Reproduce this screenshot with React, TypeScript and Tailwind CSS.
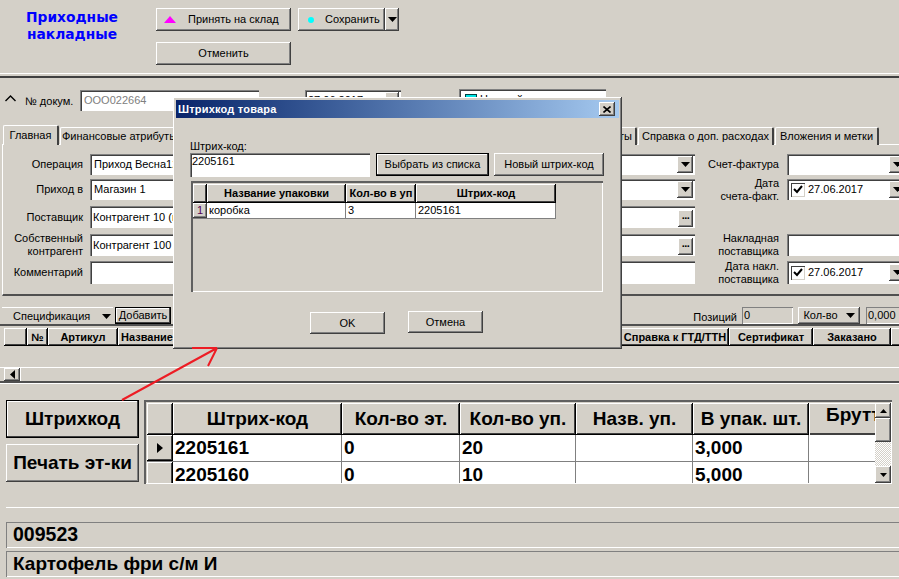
import React from "react";

const RAISED = "shadow-[inset_-1px_-1px_0_#404040,inset_1px_1px_0_#ffffff,inset_-2px_-2px_0_#808080]";
const SUNKEN = "shadow-[inset_1px_1px_0_#808080,inset_2px_2px_0_#404040,inset_-1px_-1px_0_#ffffff]";
const HEAD = "shadow-[inset_-1px_-1px_0_#000000,inset_1px_1px_0_#ffffff,inset_-2px_-2px_0_#404040]";
const DEF = "shadow-[inset_0_0_0_1px_#000000,inset_-2px_-2px_0_#404040,inset_2px_2px_0_#ffffff]";

function Btn({ className = "", children }: { className?: string; children?: React.ReactNode }) {
  return <div className={`flex items-center justify-center bg-[#d4d0c8] text-black shrink-0 ${RAISED} ${className}`}>{children}</div>;
}

function Caret({ className = "" }: { className?: string }) {
  return (
    <svg width="9" height="5" viewBox="0 0 9 5" className={className}>
      <path d="M0 0h9L4.5 5z" fill="#000" />
    </svg>
  );
}

function Input({ className = "", children }: { className?: string; children?: React.ReactNode }) {
  return <div className={`flex items-center bg-white overflow-hidden shrink-0 whitespace-nowrap ${SUNKEN} ${className}`}>{children}</div>;
}

function Combo({ text, w = "w-[605px]" }: { text: string; w?: string }) {
  return (
    <Input className={`h-full pl-[4px] justify-between pr-[2px] ${w}`}>
      <span>{text}</span>
      <Btn className="w-[16px] h-[17px]"><Caret /></Btn>
    </Input>
  );
}

function Lookup({ text }: { text: string }) {
  return (
    <Input className="h-full w-[605px] pl-[3px] pr-[2px] justify-between">
      <span>{text}</span>
      <Btn className="w-[15px] h-[17px] mt-[2px] font-bold items-start leading-[11px] tracking-tighter">...</Btn>
    </Input>
  );
}

function DateBox() {
  return (
    <Input className="h-full w-[120px] pl-[4px] pr-[2px]">
      <span className="w-[14px] h-[14px] bg-white shadow-[inset_1px_1px_0_#404040,inset_-1px_-1px_0_#d4d0c8] flex items-center justify-center shrink-0">
        <svg width="10" height="9" viewBox="0 0 10 9"><path d="M1 4l3 3 5-6" fill="none" stroke="#000" strokeWidth="2" /></svg>
      </span>
      <span className="ml-[3px] flex-1">27.06.2017</span>
      <Btn className="w-[16px] h-[17px]"><Caret /></Btn>
    </Input>
  );
}

function Row({ h, mt, label, field, rlabel, rfield }: { h: string; mt: string; label: React.ReactNode; field: React.ReactNode; rlabel?: React.ReactNode; rfield?: React.ReactNode }) {
  return (
    <div className={`flex items-stretch ${h} ${mt}`}>
      <div className="w-[80px] shrink-0 flex items-center justify-end text-right leading-[13px]">{label}</div>
      <div className="ml-[7px] shrink-0 h-full">{field}</div>
      <div className="w-[84px] shrink-0 flex items-center justify-end text-right leading-[13px]">{rlabel}</div>
      <div className="ml-[8px] shrink-0 h-full">{rfield}</div>
    </div>
  );
}

function Tab({ w, active, children, right }: { w: string; active?: boolean; children: React.ReactNode; right?: boolean }) {
  return (
    <div className={`${w} shrink-0 bg-[#d4d0c8] border-t border-l border-white border-r-2 border-r-[#404040] rounded-t-[2px] flex items-center whitespace-nowrap overflow-hidden ${right ? "justify-end pr-[3px]" : "justify-center"} ${active ? "h-[20px] relative z-10" : "h-[18px] mt-[2px] ml-[1px]"}`}>
      {children}
    </div>
  );
}

function SpecHead({ w, children }: { w: string; children?: React.ReactNode }) {
  return <div className={`${w} h-full shrink-0 flex items-center justify-center font-bold whitespace-nowrap overflow-hidden ${HEAD}`}>{children}</div>;
}

function BigHead({ w, children }: { w: string; children?: React.ReactNode }) {
  return <div className={`${w} h-full shrink-0 flex items-center justify-center whitespace-nowrap overflow-hidden ${HEAD}`}>{children}</div>;
}

function BigCell({ w, children, last }: { w: string; children?: React.ReactNode; last?: boolean }) {
  return <div className={`${w} h-full shrink-0 bg-white pl-[2px] overflow-hidden leading-[25px] whitespace-nowrap ${last ? "" : "border-r border-r-[#808080]"}`}>{children}</div>;
}

function Dialog() {
  const cols = ["w-[139px]", "w-[70px]", "w-[140px]"];
  return (
    <div className="absolute left-[173px] top-[97px] w-[449px] h-[252px] bg-[#d4d0c8] z-20 p-[3px] shadow-[inset_-1px_-1px_0_#404040,inset_1px_1px_0_#ffffff,inset_-2px_-2px_0_#808080]">
      <div className="h-[18px] bg-linear-to-r from-[#0a246a] to-[#a6caf0] flex items-center justify-between pl-[2px] pr-[4px]">
        <span className="text-white font-bold text-[11px] tracking-[0.2px]">Штрихкод товара</span>
        <Btn className="w-[16px] h-[14px]">
          <svg width="8" height="7" viewBox="0 0 8 7"><path d="M0.5 0.5L7.5 6.5M7.5 0.5L0.5 6.5" stroke="#000" strokeWidth="1.6" /></svg>
        </Btn>
      </div>
      <div className="pl-[14px] pt-[22px]">
        <div className="leading-[13px] h-[13px]">Штрих-код:</div>
        <div className="flex h-[24px]">
          <Input className="w-[180px] h-[24px] pl-[2px] items-start pt-[2px] leading-[13px]">2205161</Input>
          <Btn className={`w-[113px] h-[23px] ml-[6px] ${DEF}`}>Выбрать из списка</Btn>
          <Btn className="w-[110px] h-[23px] ml-[5px]">Новый штрих-код</Btn>
        </div>
        <div className="w-[412px] h-[111px] mt-[4px] ml-[1px] p-[3px] pl-[2px] shadow-[inset_2px_2px_0_#606060,inset_-1px_-1px_0_#ffffff]">
          <div className="flex h-[19px] font-bold">
            <div className={`w-[14px] h-full ${HEAD}`} />
            {["Название упаковки", "Кол-во в уп", "Штрих-код"].map((t, i) => (
              <div key={t} className={`${cols[i]} h-full flex items-center justify-center whitespace-nowrap overflow-hidden ${HEAD}`}>{t}</div>
            ))}
          </div>
          <div className="flex w-fit h-[16px] border-b border-b-[#808080]">
            <div className={`w-[14px] h-full flex items-center justify-center text-[#550055] ${RAISED}`}>1</div>
            {["коробка", "3", "2205161"].map((t, i) => (
              <div key={t} className={`${cols[i]} h-full bg-white border-r border-r-[#808080] pl-[2px] leading-[14px]`}>{t}</div>
            ))}
          </div>
        </div>
        <div className="flex items-start mt-[20px] ml-[120px]">
          <Btn className="w-[75px] h-[22px]">OK</Btn>
          <Btn className="w-[75px] h-[22px] ml-[23px] -mt-[1px]">Отмена</Btn>
        </div>
      </div>
    </div>
  );
}

export default function App() {
  return (
    <div className="relative w-[899px] h-[579px] overflow-hidden bg-[#d4d0c8] font-['Liberation_Sans',sans-serif] text-[11px] text-black">
      {/* Toolbar */}
      <div className="flex h-[73px] pt-[8px]">
        <div className="w-[144px] shrink-0 pt-px text-center font-['DejaVu_Sans',sans-serif] font-bold text-[13.8px] leading-[17px] text-[#0000ff]">
          Приходные<br />накладные
        </div>
        <div className="ml-[12px]">
          <div className="flex">
            <Btn className="w-[135px] h-[23px] justify-start">
              <svg width="12" height="7" viewBox="0 0 12 7" className="ml-[8px]"><path d="M6 0l6 7H0z" fill="#ff00ff" /></svg>
              <span className="ml-[12px]">Принять на склад</span>
            </Btn>
            <Btn className="w-[87px] h-[23px] ml-[7px] justify-start">
              <span className="ml-[10px] w-[6px] h-[6px] rounded-full bg-[#00ffff]" />
              <span className="ml-[11px]">Сохранить</span>
            </Btn>
            <Btn className="w-[14px] h-[23px]"><Caret /></Btn>
          </div>
          <Btn className="w-[135px] h-[23px] mt-[11px]">Отменить</Btn>
        </div>
      </div>
      <div className="h-[5px] border-t border-t-white border-b-2 border-b-[#404040]" />

      {/* Document row */}
      <div className="flex items-start h-[47px] pt-[12px]">
        <svg width="11" height="7" viewBox="0 0 11 7" className="ml-[5px] mt-[5px] shrink-0"><path d="M0.5 6L5.5 1l5 5" fill="none" stroke="#000" strokeWidth="1.4" /></svg>
        <span className="ml-[9px] mt-[3px] w-[55px] shrink-0">№ докум.</span>
        <Input className="w-[179px] h-[21px] pl-[4px] text-[#808080]">ООО022664</Input>
        <span className="ml-[16px] mt-[4px] w-[30px] shrink-0">Дата</span>
        <Input className="w-[96px] h-[21px] pl-[3px] justify-between pr-[2px]">
          <span>27.06.2017</span>
          <Btn className="w-[14px] h-[17px]"><Caret /></Btn>
        </Input>
        <span className="ml-[17px] mt-[3px] w-[41px] shrink-0">Склад</span>
        <Input className="w-[147px] h-[21px] -mt-[1px] pl-[6px]">
          <span className="w-[12px] h-[12px] bg-[#00e5e5] border border-[#004040]" />
          <span className="ml-[3px]">Настройка</span>
        </Input>
      </div>

      {/* Tabs */}
      <div className="flex items-start h-[19px] pl-[3px]">
        <Tab w="w-[56px]" active>Главная</Tab>
        <Tab w="w-[120px]">Финансовые атрибуты</Tab>
        <Tab w="w-[456px]" right>Дополнительные атрибуты</Tab>
        <Tab w="w-[136px]">Справка о доп. расходах</Tab>
        <Tab w="w-[104px]">Вложения и метки</Tab>
      </div>

      {/* Tab panel */}
      <div className="ml-[2px] h-[152px] border-t border-t-white border-l border-l-white border-b-2 border-b-[#505050] pt-[9px]">
        <Row h="h-[21px]" mt="mt-0" label="Операция" field={<Combo text="Приход Весна12" />} rlabel="Счет-фактура" rfield={<Combo text="" w="w-[120px]" />} />
        <Row h="h-[21px]" mt="mt-[4px]" label="Приход в" field={<Combo text="Магазин 1" />} rlabel={<span>Дата<br />счета-факт.</span>} rfield={<DateBox />} />
        <Row h="h-[22px]" mt="mt-[6px]" label="Поставщик" field={<Lookup text="Контрагент 10 (поставщик)" />} />
        <Row h="h-[22px]" mt="mt-[6px]" label={<span>Собственный<br />контрагент</span>} field={<Lookup text="Контрагент 100" />} rlabel={<span>Накладная<br />поставщика</span>} rfield={<Input className="w-[120px] h-full" />} />
        <Row h="h-[23px]" mt="mt-[5px]" label="Комментарий" field={<Input className="w-[605px] h-full" />} rlabel={<span>Дата накл.<br />поставщика</span>} rfield={<DateBox />} />
      </div>

      {/* Specification bar */}
      <div className="flex items-start h-[30px] pt-[11px] pl-[2px] border-b-2 border-b-[#505050]">
        <div className="w-[111px] h-[17px] shrink-0 border-t border-t-white flex items-center pl-[11px]">
          Спецификация
          <Caret className="ml-[12px]" />
        </div>
        <Btn className={`w-[56px] h-[17px] ml-[2px] ${DEF}`}>Добавить</Btn>
        <div className="w-[566px] shrink-0 text-right pt-[2px]">Позиций</div>
        <div className="w-[51px] h-[17px] ml-[5px] shrink-0 pl-[2px] shadow-[inset_1px_1px_0_#808080,inset_-1px_-1px_0_#ffffff] leading-[17px]">0</div>
        <Btn className="w-[62px] h-[17px] ml-[5px]">
          Кол-во<Caret className="ml-[8px]" />
        </Btn>
        <div className="w-[40px] h-[17px] ml-[6px] shrink-0 pl-[2px] shadow-[inset_1px_1px_0_#808080,inset_-1px_-1px_0_#ffffff] leading-[17px]">0,000</div>
      </div>

      {/* Specification grid */}
      <div className="h-[42px] pl-[4px] pt-[2px] border-b border-b-white">
        <div className="flex h-[18px]">
          <SpecHead w="w-[23px]" />
          <SpecHead w="w-[21px]">№</SpecHead>
          <SpecHead w="w-[70px]">Артикул</SpecHead>
          <SpecHead w="w-[503px]"><span className="w-full pl-[3px]">Название</span></SpecHead>
          <SpecHead w="w-[108px]">Справка к ГТД/ТТН</SpecHead>
          <SpecHead w="w-[84px]">Сертификат</SpecHead>
          <SpecHead w="w-[78px]">Заказано</SpecHead>
          <SpecHead w="w-[20px]" />
        </div>
      </div>
      <div className="h-[13px] pl-[4px] flex">
        <Btn className="w-[16px] h-[13px]">
          <svg width="5" height="9" viewBox="0 0 5 9"><path d="M5 0v9L0 4.5z" fill="#000" /></svg>
        </Btn>
        <div className="flex-1 border-l border-l-white" />
      </div>
      <div className="h-[3px] border-t-2 border-t-[#505050] border-b border-b-white" />

      {/* Barcode section */}
      <div className="flex items-start pl-[6px] mt-[16px] h-[84px] font-bold text-[19px]">
        <div className="w-[133px] shrink-0">
          <Btn className={`w-[133px] h-[38px] ${DEF}`}>Штрихкод</Btn>
          <Btn className="w-[133px] h-[38px] mt-[6px]">Печать эт-ки</Btn>
        </div>
        <div className="ml-[5px] w-[748px] h-[84px] shrink-0 flex pl-[3px] pt-[3px] pb-px pr-px shadow-[inset_2px_2px_0_#606060,inset_-1px_-1px_0_#ffffff]">
          <div className="w-[728px] shrink-0 overflow-hidden">
            <div className="flex h-[32px]">
              <BigHead w="w-[26px]" />
              <BigHead w="w-[169px]">Штрих-код</BigHead>
              <BigHead w="w-[118px]">Кол-во эт.</BigHead>
              <BigHead w="w-[116px]">Кол-во уп.</BigHead>
              <BigHead w="w-[117px]">Назв. уп.</BigHead>
              <BigHead w="w-[116px]">В упак. шт.</BigHead>
              <div className="w-[66px] h-full shrink-0 overflow-hidden shadow-[inset_1px_1px_0_#ffffff,inset_0_-2px_0_#404040]">
                <div className="w-[100px] text-center leading-[24px]">Брутто<br />шт.</div>
              </div>
            </div>
            <div className="flex h-[27px] border-b border-b-[#808080]">
              <div className={`w-[26px] h-full shrink-0 flex items-center justify-center ${HEAD}`}>
                <svg width="6" height="10" viewBox="0 0 6 10"><path d="M0 0l6 5-6 5z" fill="#000" /></svg>
              </div>
              <BigCell w="w-[169px]">2205161</BigCell>
              <BigCell w="w-[118px]">0</BigCell>
              <BigCell w="w-[116px]">20</BigCell>
              <BigCell w="w-[117px]" />
              <BigCell w="w-[116px]">3,000</BigCell>
              <BigCell w="w-[66px]" last />
            </div>
            <div className="flex h-[21px]">
              <div className={`w-[26px] h-[27px] shrink-0 ${HEAD}`} />
              <BigCell w="w-[169px]">2205160</BigCell>
              <BigCell w="w-[118px]">0</BigCell>
              <BigCell w="w-[116px]">10</BigCell>
              <BigCell w="w-[117px]" />
              <BigCell w="w-[116px]">5,000</BigCell>
              <BigCell w="w-[66px]" last />
            </div>
          </div>
          <div className="w-[16px] shrink-0 flex flex-col">
            <Btn className="w-[16px] h-[15px]">
              <svg width="7" height="4" viewBox="0 0 7 4"><path d="M0 4h7L3.5 0z" fill="#000" /></svg>
            </Btn>
            <Btn className="w-[16px] h-[24px]" />
            <div className="h-[24px] bg-[repeating-conic-gradient(#ffffff_0_25%,#d4d0c8_0_50%)] bg-[length:2px_2px]" />
            <Btn className="w-[16px] h-[17px]">
              <svg width="7" height="4" viewBox="0 0 7 4"><path d="M0 0h7L3.5 4z" fill="#000" /></svg>
            </Btn>
          </div>
        </div>
      </div>

      <div className="ml-[6px] mt-[23px] h-px bg-white" />
      <div className="ml-[6px] mt-[14px] h-[26px] pl-[7px] flex items-center font-bold text-[19.5px] shadow-[inset_1px_1px_0_#808080,inset_0_-1px_0_#ffffff]">009523</div>
      <div className="ml-[6px] mt-[3px] h-[26px] pl-[7px] flex items-center font-bold text-[19px] shadow-[inset_1px_1px_0_#808080,inset_0_-1px_0_#ffffff]">Картофель фри с/м И</div>

      <Dialog />

      {/* Red arrow annotation */}
      <svg className="absolute left-0 top-0 z-30 pointer-events-none" width="899" height="579" viewBox="0 0 899 579">
        <path d="M122 400L217 348M192 348h25M217 348l-9 18" fill="none" stroke="#ed1c24" strokeWidth="2" />
      </svg>
    </div>
  );
}
